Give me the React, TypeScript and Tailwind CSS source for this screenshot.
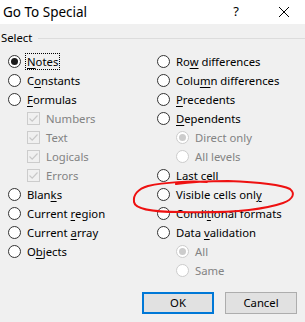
import type { ReactNode } from "react";

type Item = {
  label: ReactNode;
  kind: "radio" | "check" | "subradio";
  checked?: boolean;
  disabled?: boolean;
  focus?: boolean;
};

const U = ({ children }: { children: ReactNode }) => <span className="underline underline-offset-2">{children}</span>;

const left: Item[] = [
  { label: <><U>N</U>otes</>, kind: "radio", checked: true, focus: true },
  { label: <>C<U>o</U>nstants</>, kind: "radio" },
  { label: <><U>F</U>ormulas</>, kind: "radio" },
  { label: "Numbers", kind: "check", checked: true, disabled: true },
  { label: "Text", kind: "check", checked: true, disabled: true },
  { label: "Logicals", kind: "check", checked: true, disabled: true },
  { label: "Errors", kind: "check", checked: true, disabled: true },
  { label: <>Blan<U>k</U>s</>, kind: "radio" },
  { label: <>Current <U>r</U>egion</>, kind: "radio" },
  { label: <>Current <U>a</U>rray</>, kind: "radio" },
  { label: <>O<U>b</U>jects</>, kind: "radio" },
];

const right: Item[] = [
  { label: <>Ro<U>w</U> differences</>, kind: "radio" },
  { label: <>Colu<U>m</U>n differences</>, kind: "radio" },
  { label: <><U>P</U>recedents</>, kind: "radio" },
  { label: <><U>D</U>ependents</>, kind: "radio" },
  { label: "Direct only", kind: "subradio", checked: true, disabled: true },
  { label: "All levels", kind: "subradio", disabled: true },
  { label: <>La<U>s</U>t cell</>, kind: "radio" },
  { label: <>Visible cells onl<U>y</U></>, kind: "radio" },
  { label: <>Condi<U>t</U>ional formats</>, kind: "radio" },
  { label: <>Data <U>v</U>alidation</>, kind: "radio" },
  { label: "All", kind: "subradio", checked: true, disabled: true },
  { label: "Same", kind: "subradio", disabled: true },
];

function Radio({ checked, disabled }: { checked?: boolean; disabled?: boolean }) {
  return (
    <span
      className={`flex h-[13px] w-[13px] shrink-0 items-center justify-center rounded-full border bg-white ${
        disabled ? "border-[#cccccc]" : "border-[#333333]"
      }`}
    >
      {checked && <span className={`h-[7px] w-[7px] rounded-full ${disabled ? "bg-[#cccccc]" : "bg-[#1a1a1a]"}`} />}
    </span>
  );
}

function Check() {
  return (
    <span className="flex h-[13px] w-[13px] shrink-0 items-center justify-center border border-[#cccccc] bg-[#f0f0f0]">
      <svg width="11" height="11" viewBox="0 0 11 11">
        <path d="M1.5 5.5 L4.2 8.2 L9.5 2.5" fill="none" stroke="#c8c8c8" strokeWidth="1.2" />
      </svg>
    </span>
  );
}

function Row({ item }: { item: Item }) {
  const sub = item.kind !== "radio";
  return (
    <div className={`flex h-[19px] items-center gap-[5px] ${sub ? "pl-[19px]" : ""}`}>
      {item.kind === "check" ? <Check /> : <Radio checked={item.checked} disabled={item.disabled} />}
      <span
        className={`whitespace-nowrap px-[1px] leading-[15px] ${item.disabled ? "text-[#838383]" : "text-black"} ${
          item.focus ? "outline outline-1 outline-dotted outline-black" : ""
        }`}
      >
        {item.label}
      </span>
    </div>
  );
}

export default function App() {
  return (
    <div className="relative h-[322px] w-[305px] overflow-hidden bg-[#f0f0f0] text-[11.3px] text-black [font-family:'Noto_Sans',sans-serif]">
      <div className="flex h-[24px] items-center bg-white pl-[3px] pr-[15px] text-[13.5px]">
        <span className="flex-1">Go To Special</span>
        <span className="mr-[39px] text-[13px]">?</span>
        <svg width="12" height="12" viewBox="0 0 12 12">
          <path d="M1 1 L11 11 M11 1 L1 11" stroke="#000" strokeWidth="1" />
        </svg>
      </div>

      <div className="flex h-[28px] items-center gap-[6px] pl-[1px]">
        <span>Select</span>
        <div className="h-px flex-1 bg-[#dcdcdc]" />
      </div>

      <div className="grid grid-cols-[149px_1fr] pl-[8px]">
        <div className="flex flex-col">
          {left.map((it, i) => (
            <Row key={i} item={it} />
          ))}
        </div>
        <div className="flex flex-col">
          {right.map((it, i) => (
            <Row key={i} item={it} />
          ))}
        </div>
      </div>

      <div className="flex justify-end gap-[11px] pr-[8px] pt-[12px]">
        <button className="h-[22px] w-[72px] border-2 border-[#0078d7] bg-[#e1e1e1]">OK</button>
        <button className="h-[22px] w-[72px] border border-[#adadad] bg-[#e1e1e1]">Cancel</button>
      </div>

      <svg className="pointer-events-none absolute left-0 top-0" width="305" height="322" viewBox="0 0 305 322">
        <path
          d="M207 182 C190 181 165 182 148 186 C138 189 133 195 134 202 C135 209 150 212 180 212 C218 213 260 211 283 203 C294 199 295 193 290 189 C280 184 255 182 228 181 C208 181 190 182 176 184"
          fill="none"
          stroke="#ee1111"
          strokeWidth="2"
          strokeLinecap="round"
        />
      </svg>
    </div>
  );
}
